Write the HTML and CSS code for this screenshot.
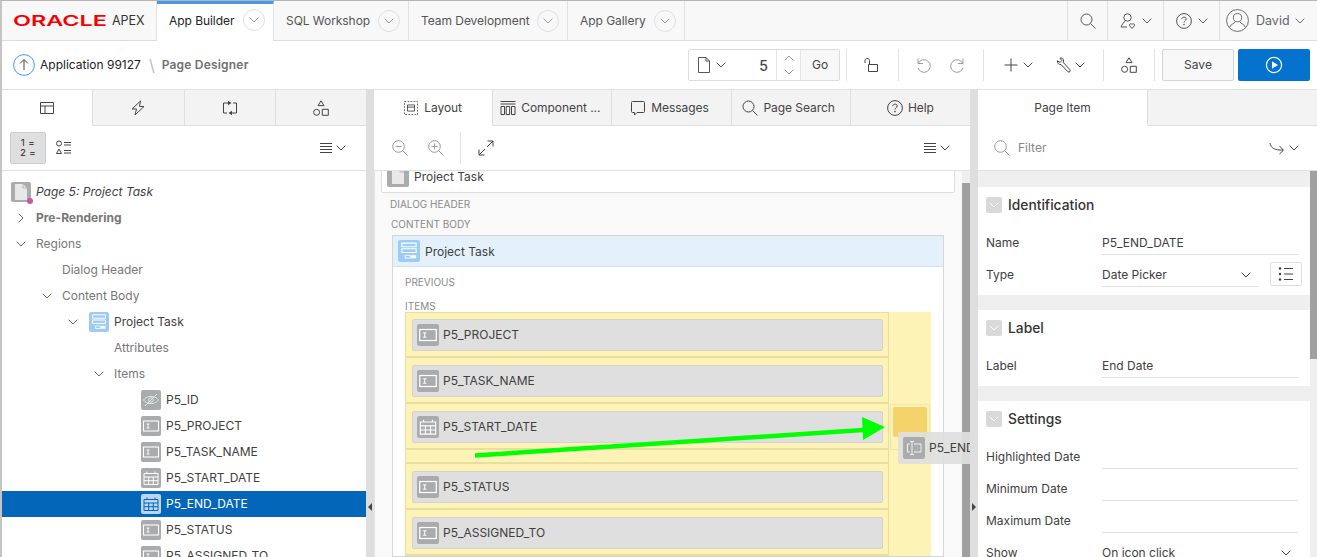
FILE: index.html
```html
<!DOCTYPE html>
<html lang="en">
<head>
    <meta charset="UTF-8">
    <meta name="viewport" content="width=device-width, initial-scale=1.0">
    <title>Page Designer</title>
    <link rel="stylesheet" href="styles.css">
</head>
<body>
    <svg class="sprites" width="0" height="0">
        <defs>
            <symbol id="chev" viewBox="0 0 10 6"><path d="M.7.7 5 5 9.3.7" fill="none" stroke="currentColor"/></symbol>
            <symbol id="search" viewBox="0 0 16 16"><circle cx="6.5" cy="6.5" r="5.5" fill="none" stroke="currentColor"/><path d="m10.5 10.5 5 5" stroke="currentColor" fill="none"/></symbol>
            <symbol id="help" viewBox="0 0 16 16"><circle cx="8" cy="8" r="7.4" fill="none" stroke="currentColor"/><path d="M5.8 6.2C5.9 3.4 10.2 3.5 10.2 6c0 1.7-2.2 1.700-2.200 3.500" fill="none" stroke="currentColor"/><circle cx="8" cy="11.600" r=".8" fill="currentColor"/></symbol>
            <symbol id="shapes" viewBox="0 0 16 16"><path d="M8 .8 11 5.600H5Z M9.300 9.300h6v6h-6Z" fill="none" stroke="currentColor"/><circle cx="3.600" cy="12.300" r="3" fill="none" stroke="currentColor"/></symbol>
            <symbol id="menu" viewBox="0 0 12 10"><path d="M0 .5h12M0 3.500h12M0 6.500h12M0 9.500h12" stroke="currentColor"/></symbol>
            <symbol id="doc" viewBox="0 0 12 16"><path d="M.5.500h7.500l3.500 3.500v11.500H.5ZM8 .5V4h3.500" fill="none" stroke="currentColor"/></symbol>
            <symbol id="item" viewBox="0 0 20 20"><rect width="20" height="20" rx="2" fill="#a9abad"/><rect x="2.500" y="5" width="15" height="10" fill="none" stroke="#fff" stroke-width="1.100"/><path d="M5.500 8h3M5.500 12h3M7 8v4" stroke="#fff" stroke-width=".9"/></symbol>
            <symbol id="date" viewBox="0 0 20 20"><rect width="20" height="20" rx="2" fill="#a9abad"/><path d="M3 5.500h14v11H3ZM3 9h14M3 12.700h14M7.700 9v7.500M12.300 9v7.500M6 3.500v2M14 3.500v2" fill="none" stroke="#fff"/></symbol>
            <symbol id="hidden" viewBox="0 0 20 20"><rect width="20" height="20" rx="2" fill="#a9abad"/><path d="M2.500 10C6 5.200 14 5.200 17.500 10 14 14.800 6 14.800 2.500 10ZM4 16 16 4" fill="none" stroke="#e4e4e4"/><circle cx="10" cy="10" r="2.300" fill="none" stroke="#e4e4e4"/></symbol>
            <symbol id="region" viewBox="0 0 20 20"><rect width="20" height="20" rx="2" fill="#9ccbf3"/><path d="M3.500 2.800h13v3.400h-13ZM3.500 8h13v3.400h-13Z" fill="none" stroke="#fff"/><path d="M6.500 14h5v2.500h-5Z" fill="none" stroke="#fff" stroke-width=".8"/><path d="M12 13.800h4.500v2.900H12Z" fill="#fff"/></symbol>
        </defs>
    </svg>

    <div class="app">
        <header class="topbar">
            <div class="brand">
                <span class="oracle">ORACLE</span>
                <span class="apex">APEX</span>
            </div>
            <div class="navtab navtab-on w-builder"><span>App Builder</span><i class="circle"><svg class="c10"><use href="#chev"/></svg></i></div>
            <div class="navtab w-sql"><span>SQL Workshop</span><i class="circle"><svg class="c10"><use href="#chev"/></svg></i></div>
            <div class="navtab w-team"><span>Team Development</span><i class="circle"><svg class="c10"><use href="#chev"/></svg></i></div>
            <div class="navtab w-gallery"><span>App Gallery</span><i class="circle"><svg class="c10"><use href="#chev"/></svg></i></div>
            <div class="grow"></div>
            <div class="navtool w-search"><svg class="i16"><use href="#search"/></svg></div>
            <div class="navtool w-tool">
                <svg class="i16" viewBox="0 0 16 16"><circle cx="7.500" cy="4.500" r="3.700" fill="none" stroke="currentColor"/><path d="M5.200 8C3.800 9 2 11.500 1 14h6" fill="none" stroke="currentColor"/><path d="M12 15.500 9.800 13c-1.300-1.500.9-3.200 2.200-1.500 1.300-1.700 3.500 0 2.200 1.500Z" fill="none" stroke="currentColor"/></svg>
                <svg class="c10"><use href="#chev"/></svg>
            </div>
            <div class="navtool w-tool"><svg class="i16"><use href="#help"/></svg><svg class="c10"><use href="#chev"/></svg></div>
            <div class="navuser">
                <svg class="avatar" viewBox="0 0 24 24"><circle cx="12" cy="12" r="11.400" fill="none" stroke="currentColor"/><circle cx="12" cy="9" r="4.300" fill="none" stroke="currentColor"/><path d="M9.500 13c0 2.500-5 2.500-5.600 6M14.500 13c0 2.500 5 2.500 5.600 6" fill="none" stroke="currentColor"/></svg>
                <span>David</span>
                <svg class="c10"><use href="#chev"/></svg>
            </div>
        </header>

        <div class="crumbbar">
            <svg class="upcircle" viewBox="0 0 22 22"><circle cx="11" cy="11" r="10.400" fill="none" stroke="#4a9be6"/><path d="M11 16V6M7 9.500l4-4 4 4" fill="none" stroke="#444"/></svg>
            <span class="crumb">Application 99127</span>
            <span class="crumb-sep">\</span>
            <span class="crumb-now">Page Designer</span>
            <div class="grow"></div>
            <div class="pagebox">
                <div class="pagebox-pick"><svg class="i-doc"><use href="#doc"/></svg><svg class="c10"><use href="#chev"/></svg></div>
                <div class="pagebox-num">5</div>
                <div class="pagebox-step"><svg class="c10 up"><use href="#chev"/></svg><svg class="c10"><use href="#chev"/></svg></div>
                <div class="pagebox-go">Go</div>
            </div>
            <div class="sep sep-a"></div>
            <svg class="i16 lock" viewBox="0 0 16 16"><path d="M5.500 7.500h9v7h-9ZM2 6V3.500C2 .8 6.500.8 6.500 3.500v4" fill="none" stroke="currentColor"/></svg>
            <div class="sep sep-b"></div>
            <svg class="i16 fade undo" viewBox="0 0 16 16"><path d="M3 1.500v5h5M3.300 6.300A6.300 6.300 0 1 1 3 11" fill="none" stroke="currentColor"/></svg>
            <svg class="i16 fade redo" viewBox="0 0 16 16"><path d="M13 1.500v5H8M12.700 6.300A6.300 6.300 0 1 0 13 11" fill="none" stroke="currentColor"/></svg>
            <div class="sep sep-c"></div>
            <svg class="i16 plus" viewBox="0 0 16 16"><path d="M8 1.500v13M1.500 8h13" stroke="currentColor"/></svg>
            <svg class="c10 plus-c"><use href="#chev"/></svg>
            <svg class="i16 wrench" viewBox="0 0 16 16"><path d="M5.800 1 4 1.200 5.800 3.500 4 5.500 1.500 3.800C1 6 2.800 7.800 5 7.500l7 7.300c1.300 1 3-.7 2-2L7.300 5.500C7.800 3.500 7.500 1.500 5.800 1Z" fill="none" stroke="currentColor"/></svg>
            <svg class="c10 wrench-c"><use href="#chev"/></svg>
            <div class="sep sep-d"></div>
            <svg class="i16 shapes"><use href="#shapes"/></svg>
            <div class="sep sep-e"></div>
            <div class="btn-save">Save</div>
            <div class="btn-run"><svg width="18" height="18" viewBox="0 0 18 18"><circle cx="9" cy="9" r="7.600" fill="none" stroke="#fff" stroke-width="1.200"/><path d="M7 5.200 13 9l-6 3.800Z" fill="#fff"/></svg></div>
        </div>

        <main class="panes">
            <section class="pane">
                <div class="tabs tabs-left">
                    <div class="tab tab-on"><svg class="i16" viewBox="0 0 16 16"><path d="M1.500 2.500h13v11h-13ZM1.500 6h13M6 6v7.500" fill="none" stroke="currentColor"/></svg></div>
                    <div class="tab"><svg class="i16" viewBox="0 0 16 16"><path d="M10.500 1 2 9h4.500L5 15l9-8.500H9.500Z" fill="none" stroke="currentColor"/></svg></div>
                    <div class="tab"><svg class="i16" viewBox="0 0 16 16"><path d="M6 3H1.500v10H5M10 13h4.500V3H11" fill="none" stroke="currentColor"/><path d="M6 .8 9.500 3 6 5.200ZM10 10.800 6.500 13 10 15.200Z" fill="currentColor"/></svg></div>
                    <div class="tab"><svg class="i16"><use href="#shapes"/></svg></div>
                </div>
                <div class="toolbar">
                    <div class="toggle-on">
                        <span class="mini">1 =</span>
                        <span class="mini">2 =</span>
                    </div>
                    <svg class="i16 list2" viewBox="0 0 16 16"><circle cx="3" cy="3.500" r="2.500" fill="none" stroke="currentColor"/><path d="M3 9 5.500 13.500H.5Z" fill="none" stroke="currentColor"/><path d="M8 2.500h7M8 5h7M8 10.500h7M8 13h7" stroke="currentColor"/></svg>
                    <div class="grow"></div>
                    <svg class="i-menu"><use href="#menu"/></svg>
                    <svg class="c10 menu-c"><use href="#chev"/></svg>
                </div>
                <ul class="tree">
                    <li class="node l0 node-page">
                        <span class="pageicon"><svg class="i-doc-w" viewBox="0 0 12 16"><path d="M0 0h8l4 4v12H0Z" fill="#e8e8e8"/><path d="M8 0v4h4" fill="none" stroke="#a9abad" stroke-width=".8"/></svg><b></b></span>
                        <em>Page 5: Project Task</em>
                    </li>
                    <li class="node l0"><svg class="tw tw-r"><use href="#chev"/></svg><strong>Pre-Rendering</strong></li>
                    <li class="node l0"><svg class="tw"><use href="#chev"/></svg>Regions</li>
                    <li class="node l1">Dialog Header</li>
                    <li class="node l1"><svg class="tw"><use href="#chev"/></svg>Content Body</li>
                    <li class="node l2 dark"><svg class="tw"><use href="#chev"/></svg><svg class="i20"><use href="#region"/></svg>Project Task</li>
                    <li class="node l3">Attributes</li>
                    <li class="node l3"><svg class="tw"><use href="#chev"/></svg>Items</li>
                    <li class="node l4 dark"><svg class="i20"><use href="#hidden"/></svg>P5_ID</li>
                    <li class="node l4 dark"><svg class="i20"><use href="#item"/></svg>P5_PROJECT</li>
                    <li class="node l4 dark"><svg class="i20"><use href="#item"/></svg>P5_TASK_NAME</li>
                    <li class="node l4 dark"><svg class="i20"><use href="#date"/></svg>P5_START_DATE</li>
                    <li class="node l4 node-sel">
                        <svg class="i20" viewBox="0 0 20 20"><rect width="20" height="20" rx="2" fill="#bcd6ee"/><path d="M3 5.500h14v11H3ZM3 9h14M3 12.700h14M7.700 9v7.500M12.300 9v7.500M6 3.500v2M14 3.500v2" fill="none" stroke="#0366b8"/></svg>P5_END_DATE
                    </li>
                    <li class="node l4 dark"><svg class="i20"><use href="#item"/></svg>P5_STATUS</li>
                    <li class="node l4 dark"><svg class="i20"><use href="#item"/></svg>P5_ASSIGNED_TO</li>
                </ul>
            </section>

            <div class="splitter"><i class="handle"></i></div>

            <section class="pane">
                <div class="tabs tabs-center">
                    <div class="tab tab-on"><svg class="i14" viewBox="0 0 16 16"><path d="M.5.500h15v15H.5Z" fill="none" stroke="currentColor" stroke-dasharray="2 1.500"/><path d="M4 4.500h8v7H4ZM4 7h8" fill="none" stroke="currentColor"/></svg>Layout</div>
                    <div class="tab tab-nudge"><svg class="i16" viewBox="0 0 16 16"><path d="M.5 1.500h15M.5 4h15M1 6.500h3.500v8H1ZM6.200 6.500h3.500v8H6.200ZM11.500 6.500H15v8h-3.500Z" fill="none" stroke="currentColor"/></svg>Component ...</div>
                    <div class="tab tab-nudge"><svg class="i16" viewBox="0 0 16 16"><path d="M2.500 1.500h11a1 1 0 0 1 1 1v9a1 1 0 0 1-1 1H7L4.500 15v-2.500h-2a1 1 0 0 1-1-1v-9a1 1 0 0 1 1-1Z" fill="none" stroke="currentColor"/></svg>Messages</div>
                    <div class="tab tab-nudge"><svg class="i16"><use href="#search"/></svg>Page Search</div>
                    <div class="tab"><svg class="i16"><use href="#help"/></svg>Help</div>
                </div>
                <div class="toolbar toolbar-center">
                    <svg class="i16 fade zoom-a" viewBox="0 0 16 16"><circle cx="6.500" cy="6.500" r="5.800" fill="none" stroke="currentColor"/><path d="m10.800 10.800 4.700 4.700M3.500 6.500h6" fill="none" stroke="currentColor"/></svg>
                    <svg class="i16 fade zoom-b" viewBox="0 0 16 16"><circle cx="6.500" cy="6.500" r="5.800" fill="none" stroke="currentColor"/><path d="m10.800 10.800 4.700 4.700M3.500 6.500h6M6.500 3.500v6" fill="none" stroke="currentColor"/></svg>
                    <div class="sep sep-tool"></div>
                    <svg class="i16 expand" viewBox="0 0 16 16"><path d="M9.500 1h5.500v5.500M15 1 9 7M1 9.500V15h5.500M1 15l6-6" fill="none" stroke="currentColor"/></svg>
                    <div class="grow"></div>
                    <svg class="i-menu"><use href="#menu"/></svg>
                    <svg class="c10 menu-c"><use href="#chev"/></svg>
                </div>
                <div class="canvas">
                    <div class="canvas-inner">
                        <div class="pagecard">
                            <span class="pageicon pageicon-card"><svg class="i-doc-w" viewBox="0 0 12 16"><path d="M0 0h8l4 4v12H0Z" fill="#e8e8e8"/><path d="M8 0v4h4" fill="none" stroke="#a9abad" stroke-width=".8"/></svg></span>
                            Project Task
                        </div>
                        <div class="cap cap-top">DIALOG HEADER</div>
                        <div class="cap cap-top cap-body">CONTENT BODY</div>
                        <div class="regioncard">
                            <div class="regionhead"><svg class="i22"><use href="#region"/></svg>Project Task</div>
                            <div class="cap cap-prev">PREVIOUS</div>
                            <div class="cap cap-items">ITEMS</div>
                            <div class="dropgrid">
                                <div class="rows">
                                    <div class="row"><div class="chip"><svg class="i22"><use href="#item"/></svg>P5_PROJECT</div></div>
                                    <div class="row"><div class="chip"><svg class="i22"><use href="#item"/></svg>P5_TASK_NAME</div></div>
                                    <div class="row"><div class="chip"><svg class="i22"><use href="#date"/></svg>P5_START_DATE</div></div>
                                    <div class="row row-thin"></div>
                                    <div class="row"><div class="chip"><svg class="i22"><use href="#item"/></svg>P5_STATUS</div></div>
                                    <div class="row"><div class="chip"><svg class="i22"><use href="#item"/></svg>P5_ASSIGNED_TO</div></div>
                                </div>
                                <div class="dropcol">
                                    <div class="dropcell"><div class="dropzone"></div></div>
                                </div>
                            </div>
                        </div>
                    </div>
                    <div class="scroll-v scroll-center"><i></i></div>

                    <div class="ghost">
                        <svg class="i22" viewBox="0 0 22 22"><rect width="22" height="22" rx="2" fill="#a9abad"/><path d="M7 7H4.500v8H7M11 7h7v8h-7M7 4.500h4M7 17.500h4M9 4.500v13" fill="none" stroke="#eee"/></svg>P5_END_DATE
                    </div>
                    <svg class="arrow" width="440" height="50" viewBox="0 0 440 50"><path d="M4 40.500 392 15" stroke="#00ff00" stroke-width="4.500"/><path d="M391 2 414 12 392 25Z" fill="#00ff00"/></svg>
                </div>
            </section>

            <div class="splitter"><i class="handle"></i></div>

            <section class="pane">
                <div class="tabs tabs-right">
                    <div class="tab tab-on">Page Item</div>
                    <div class="tab tab-blank"></div>
                </div>
                <div class="toolbar toolbar-right">
                    <svg class="i16 fade" viewBox="0 0 16 16"><circle cx="6.500" cy="6.500" r="5.800" fill="none" stroke="currentColor"/><path d="m10.800 10.800 4.700 4.700" fill="none" stroke="currentColor"/></svg>
                    <span class="filter">Filter</span>
                    <div class="grow"></div>
                    <svg class="i16 jump" viewBox="0 0 16 16"><path d="M1 3c.5 5 5 7.500 13 7M10.500 6l4 4.200-4 3.800" fill="none" stroke="currentColor"/></svg>
                    <svg class="c10 menu-c"><use href="#chev"/></svg>
                </div>
                <div class="props">
                    <div class="props-list">
                        <div class="group">
                            <div class="group-head"><i class="fold"><svg class="c10"><use href="#chev"/></svg></i>Identification</div>
                            <div class="prop"><label>Name</label><div class="val">P5_END_DATE</div></div>
                            <div class="prop"><label>Type</label>
                                <div class="val val-select">Date Picker<svg class="c10"><use href="#chev"/></svg></div>
                                <div class="listbtn"><svg class="i16" viewBox="0 0 16 16"><path d="M6 2.500h9M6 8h9M6 13.500h9" stroke="currentColor"/><circle cx="2" cy="2.500" r="1.200" fill="currentColor"/><circle cx="2" cy="8" r="1.200" fill="currentColor"/><circle cx="2" cy="13.500" r="1.200" fill="currentColor"/></svg></div>
                            </div>
                        </div>
                        <div class="group">
                            <div class="group-head"><i class="fold"><svg class="c10"><use href="#chev"/></svg></i>Label</div>
                            <div class="prop"><label>Label</label><div class="val">End Date</div></div>
                        </div>
                        <div class="group">
                            <div class="group-head"><i class="fold"><svg class="c10"><use href="#chev"/></svg></i>Settings</div>
                            <div class="prop"><label>Highlighted Date</label><div class="val"></div></div>
                            <div class="prop"><label>Minimum Date</label><div class="val"></div></div>
                            <div class="prop"><label>Maximum Date</label><div class="val"></div></div>
                            <div class="prop"><label>Show</label><div class="val">On icon click<svg class="c10"><use href="#chev"/></svg></div></div>
                        </div>
                    </div>
                    <div class="scroll-v scroll-props"><i></i></div>
                </div>
            </section>
        </main>
    </div>
</body>
</html>
```

FILE: styles.css
```css
* {
    box-sizing: border-box;
}
html, body {
    margin: 0;
    padding: 0;
    height: 100%;
    overflow: hidden;
}
body {
    font-family: Inter, "Noto Sans", sans-serif;
    font-size: 12px;
    color: #404040;
    background-color: #fff;
}
ul {
    margin: 0;
    padding: 0;
    list-style: none;
}
svg {
    flex: none;
    display: block;
}
.sprites {
    position: absolute;
}
.app {
    height: 557px;
    border-top: 1px solid #b5b5b5;
    border-left: 2px solid #c4c4c4;
    display: flex;
    flex-direction: column;
}
.grow {
    flex: 1;
}

/* sizes of icons */
.c10 {
    width: 10px;
    height: 6px;
}
.i14 {
    width: 14px;
    height: 14px;
}
.i16 {
    width: 16px;
    height: 16px;
}
.i20 {
    width: 20px;
    height: 20px;
}
.i22 {
    width: 22px;
    height: 22px;
}
.fade {
    color: #9b9b9b;
}

/* top bar */
.topbar {
    height: 40px;
    flex: none;
    display: flex;
    align-items: stretch;
    background-color: #f8f8f8;
    border-bottom: 1px solid #dcdcdc;
    color: #555;
}
.brand {
    width: 155px;
    display: flex;
    align-items: center;
    padding-left: 11px;
    border-right: 1px solid #e2e2e2;
}
.oracle {
    display: inline-block;
    width: 99px;
    color: #f80000;
    font-size: 15px;
    font-weight: 600;
    transform: scaleX(1.56);
    transform-origin: left center;
}
.apex {
    font-size: 12.5px;
    color: #333;
}
.navtab {
    display: flex;
    align-items: center;
    justify-content: space-between;
    padding: 0 8px 0 12px;
    border-right: 1px solid #e2e2e2;
    font-size: 12px;
    letter-spacing: -.05px;
}
.w-builder {
    width: 117px;
}
.w-sql {
    width: 135px;
}
.w-team {
    width: 159px;
}
.w-gallery {
    width: 117px;
}
.navtab-on {
    background-color: #fff;
    border-top: 3px solid #4a9be6;
    margin-bottom: -1px;
    color: #222;
    padding-bottom: 5px;
}
.circle {
    width: 22px;
    height: 22px;
    border: 1px solid #e0e0e0;
    border-radius: 50%;
    display: flex;
    align-items: center;
    justify-content: center;
    color: #999;
}
.navtool {
    display: flex;
    align-items: center;
    justify-content: center;
    gap: 6px;
    border-left: 1px solid #e0e0e0;
    color: #555;
}
.w-search {
    width: 40px;
}
.w-tool {
    width: 56px;
}
.navuser {
    width: 98px;
    display: flex;
    align-items: center;
    padding-left: 6px;
    border-left: 1px solid #e0e0e0;
    font-size: 12.5px;
    color: #666;
}
.avatar {
    width: 23px;
    height: 23px;
    margin-right: 7px;
}
.navuser .c10 {
    margin-left: 5px;
}

/* breadcrumb and buttons */
.crumbbar {
    height: 49px;
    flex: none;
    display: flex;
    align-items: center;
    padding: 0 7px 0 11px;
    border-bottom: 1px solid #e0e0e0;
    color: #444;
}
.upcircle {
    width: 22px;
    height: 22px;
    margin-right: 5px;
}
.crumb {
    font-size: 12px;
    color: #222;
    margin-bottom: 2px;
}
.crumb-sep {
    margin: 0 7px 0 8px;
    color: #bbb;
    font-size: 16px;
}
.crumb-now {
    font-weight: 600;
    color: #707070;
    letter-spacing: .2px;
    margin-bottom: 2px;
}
.pagebox {
    width: 152px;
    height: 32px;
    display: flex;
    border: 1px solid #dcdcdc;
    border-radius: 2px;
}
.pagebox-pick {
    width: 40px;
    display: flex;
    align-items: center;
    gap: 6px;
    padding-left: 9px;
    color: #555;
}
.i-doc {
    width: 12px;
    height: 16px;
}
.pagebox-num {
    flex: 1;
    text-align: right;
    padding: 7px 8px 0 0;
    font-size: 14px;
    font-weight: 500;
}
.pagebox-step {
    width: 24px;
    display: flex;
    flex-direction: column;
    align-items: center;
    justify-content: center;
    gap: 8px;
    border-left: 1px solid #e6e6e6;
    color: #999;
}
.up {
    transform: rotate(180deg);
}
.pagebox-go {
    width: 39px;
    display: flex;
    align-items: center;
    justify-content: center;
    padding-bottom: 2px;
    background-color: #f8f8f8;
    border-left: 1px solid #e6e6e6;
}
.sep {
    width: 1px;
    height: 32px;
    background-color: #e3e3e3;
}
.sep-a {
    margin-left: 6px;
    margin-right: 16px;
}
.sep-b {
    margin-left: 19px;
    margin-right: 16px;
}
.undo {
    margin-right: 19px;
}
.sep-c {
    margin-left: 17px;
    margin-right: 19px;
}
.plus-c {
    margin-left: 4px;
    margin-right: 23px;
}
.wrench-c {
    margin-left: 3px;
}
.sep-d {
    margin-left: 18px;
    margin-right: 17px;
}
.sep-e {
    margin-left: 17px;
    margin-right: 7px;
}
.btn-save {
    width: 72px;
    height: 32px;
    display: flex;
    align-items: center;
    justify-content: center;
    padding-bottom: 2px;
    background-color: #f8f8f8;
    border: 1px solid #d4d4d4;
    border-radius: 2px;
}
.btn-run {
    width: 72px;
    height: 32px;
    margin-left: 4px;
    display: flex;
    align-items: center;
    justify-content: center;
    background-color: #0572ce;
    border-radius: 2px;
}

/* three panes */
.panes {
    flex: 1;
    min-height: 0;
    display: grid;
    grid-template-columns: 364px 8px 596px 8px 339px;
}
.pane {
    display: flex;
    flex-direction: column;
    min-width: 0;
    min-height: 0;
    overflow: hidden;
}
.splitter {
    background-color: #dedede;
    position: relative;
}
.handle {
    position: absolute;
    left: 2px;
    top: 413px;
    width: 0;
    height: 0;
    border-top: 4px solid transparent;
    border-bottom: 4px solid transparent;
    border-left: 4px solid #444;
}
.splitter:first-of-type .handle {
    border-left: 0;
    border-right: 4px solid #444;
}
.tabs {
    height: 36px;
    flex: none;
    display: flex;
    background-color: #f3f3f3;
}
.tabs-center {
    display: grid;
    grid-template-columns: repeat(5, 1fr);
}
.tab {
    flex: 1;
    display: flex;
    align-items: center;
    justify-content: center;
    gap: 5px;
    border-right: 1px solid #dedede;
    border-bottom: 1px solid #dedede;
    color: #444;
    letter-spacing: -.05px;
}
.tab:last-child {
    border-right: 0;
}
.tab-on {
    background-color: #fff;
    border-bottom-color: #fff;
}
.tab-nudge {
    padding-right: 4px;
}
.tabs-center .tab-on {
    gap: 6px;
}
.tabs-right .tab-on {
    flex: none;
    width: 170px;
}
.toolbar {
    height: 45px;
    flex: none;
    display: flex;
    align-items: center;
    padding: 0 20px 0 8px;
    border-bottom: 1px solid #e0e0e0;
    color: #444;
}
.toggle-on {
    width: 36px;
    height: 32px;
    background-color: #dfdfdf;
    border: 1px solid #ccc;
    border-radius: 2px;
    display: flex;
    flex-direction: column;
    align-items: center;
    justify-content: center;
}
.mini {
    font-size: 9.5px;
    line-height: 10px;
    font-weight: 500;
    letter-spacing: .5px;
}
.list2 {
    margin-left: 10px;
}
.i-menu {
    width: 12px;
    height: 10px;
}
.menu-c {
    margin-left: 4px;
}

/* tree */
.tree {
    padding-top: 8px;
    color: #777;
}
.node {
    height: 26px;
    position: relative;
    display: flex;
    align-items: center;
    gap: 5px;
    padding-bottom: 2px;
    white-space: nowrap;
}
.node .i20,
.node .pageicon {
    margin-top: 2px;
}
.tw {
    position: absolute;
    width: 10px;
    height: 6px;
    top: 10px;
    color: #666;
}
.tw-r {
    transform: rotate(-90deg);
}
.l0 {
    padding-left: 34px;
}
.l0 .tw {
    left: 14px;
}
.l1 {
    padding-left: 60px;
}
.l1 .tw {
    left: 40px;
}
.l2 {
    padding-left: 87px;
}
.l2 .tw {
    left: 66px;
}
.l3 {
    padding-left: 112px;
}
.l3 .tw {
    left: 92px;
}
.l4 {
    padding-left: 139px;
}
.dark {
    color: #404040;
}
.node-page {
    padding-left: 9px;
    gap: 5px;
    color: #404040;
}
.pageicon {
    width: 20px;
    height: 20px;
    background-color: #a9abad;
    border-radius: 2px;
    display: flex;
    align-items: center;
    justify-content: center;
    position: relative;
}
.pageicon b {
    position: absolute;
    right: -2px;
    bottom: -2px;
    width: 6px;
    height: 6px;
    border-radius: 50%;
    background-color: #c8589f;
}
.i-doc-w {
    width: 12px;
    height: 16px;
}
.node-sel {
    background-color: #0366b8;
    color: #fff;
}

/* layout canvas */
.toolbar-center {
    padding-left: 18px;
}
.zoom-a {
    margin-right: 20px;
}
.sep-tool {
    margin: 0 17px 0 16px;
}
.canvas {
    flex: 1;
    min-height: 0;
    display: flex;
    position: relative;
    overflow: hidden;
    background-color: #f9f9f9;
}
.canvas-inner {
    flex: 1;
    min-width: 0;
    padding: 0 7px 0 6px;
    border-left: 1px solid #e4e4e4;
}
.pagecard {
    height: 34px;
    margin-top: -12px;
    padding-left: 5px;
    display: flex;
    align-items: center;
    gap: 5px;
    background-color: #fff;
    border: 1px solid #ddd;
    border-radius: 2px;
}
.pageicon-card {
    width: 22px;
    height: 22px;
}
.cap {
    font-size: 10px;
    line-height: 14px;
    color: #8a8a8a;
}
.cap-top {
    height: 21px;
    padding: 4px 0 0 9px;
}
.cap-body {
    padding: 3px 0 0 10px;
}
.regioncard {
    margin: 0 11px 0 11px;
    background-color: #fff;
    border: 1px solid #d6d6d6;
}
.regionhead {
    height: 31px;
    padding-left: 5px;
    display: flex;
    align-items: center;
    gap: 5px;
    background-color: #e4f1fb;
    border-bottom: 1px solid #cfe3f3;
}
.cap-prev {
    margin: 8px 0 10px 12px;
}
.cap-items {
    margin-left: 12px;
    height: 13px;
}
.dropgrid {
    margin: 0 12px;
    display: flex;
    background-color: #fdf3b6;
}
.rows {
    width: 484px;
    flex: none;
    border-top: 1px solid #e8dea0;
    border-left: 1px solid #e8dea0;
    border-right: 1px solid #e8dea0;
}
.row {
    height: 46px;
    padding: 7px 5px 0 6px;
    border-bottom: 2px solid #e8dea0;
}
.row:first-child {
    height: 45px;
    padding-top: 6px;
}
.row-thin {
    height: 14px;
    padding: 0;
}
.chip {
    height: 32px;
    padding: 0 0 2px 4px;
    display: flex;
    align-items: center;
    gap: 4px;
    background-color: #dfdfdf;
    border: 1px solid #d2d2d2;
    border-radius: 2px;
}
.chip svg {
    margin-top: 2px;
}
.dropcol {
    flex: 1;
    padding-top: 92px;
}
.dropcell {
    height: 46px;
    margin: 0 1px 0 1px;
    padding: 2px 2px;
    border: 1px solid #f0e6a8;
}
.dropzone {
    height: 30px;
    background-color: #f4d36b;
    border-radius: 2px;
}
.scroll-v {
    flex: none;
    background-color: #efefef;
}
.scroll-v i {
    display: block;
    background-color: #a0a0a0;
}
.scroll-center {
    width: 8px;
    padding-top: 12px;
}
.scroll-center i {
    height: 100%;
}
.ghost {
    position: absolute;
    left: 524px;
    top: 261px;
    width: 120px;
    height: 32px;
    padding: 0 0 2px 5px;
    display: flex;
    align-items: center;
    gap: 4px;
    background-color: rgba(222, 222, 222, .92);
    border-radius: 2px;
}
.ghost svg {
    margin-top: 2px;
}
.arrow {
    position: absolute;
    left: 97px;
    top: 244px;
}

/* properties */
.toolbar-right {
    padding: 0 18px 0 16px;
}
.filter {
    margin-left: 8px;
    padding-bottom: 1px;
    color: #888;
}
.props {
    flex: 1;
    min-height: 0;
    display: flex;
}
.props-list {
    flex: 1;
    padding-top: 16px;
    background-color: #efefef;
}
.group {
    background-color: #fff;
    padding: 10px 0 5px 8px;
    margin-bottom: 15px;
}
.group-head {
    height: 29px;
    display: flex;
    align-items: flex-start;
    gap: 6px;
    font-size: 13.8px;
    font-weight: 500;
    line-height: 16px;
    color: #333;
}
.fold {
    width: 16px;
    height: 16px;
    display: flex;
    align-items: center;
    justify-content: center;
    background-color: #d9d9d9;
    border-radius: 2px;
    color: #fff;
}
.prop {
    height: 32px;
    display: flex;
    align-items: center;
}
.prop label {
    width: 116px;
    flex: none;
}
.val {
    width: 196px;
    height: 24px;
    margin-top: 2px;
    display: flex;
    align-items: center;
    justify-content: space-between;
    padding-right: 7px;
    border-bottom: 1px solid #e0e0e0;
    color: #404040;
}
.val-select {
    width: 156px;
}
.listbtn {
    width: 32px;
    height: 24px;
    margin-left: 12px;
    display: flex;
    align-items: center;
    justify-content: center;
    border: 1px solid #ddd;
    border-radius: 2px;
}
.scroll-props {
    width: 7px;
}
.scroll-props i {
    height: 188px;
}
```
